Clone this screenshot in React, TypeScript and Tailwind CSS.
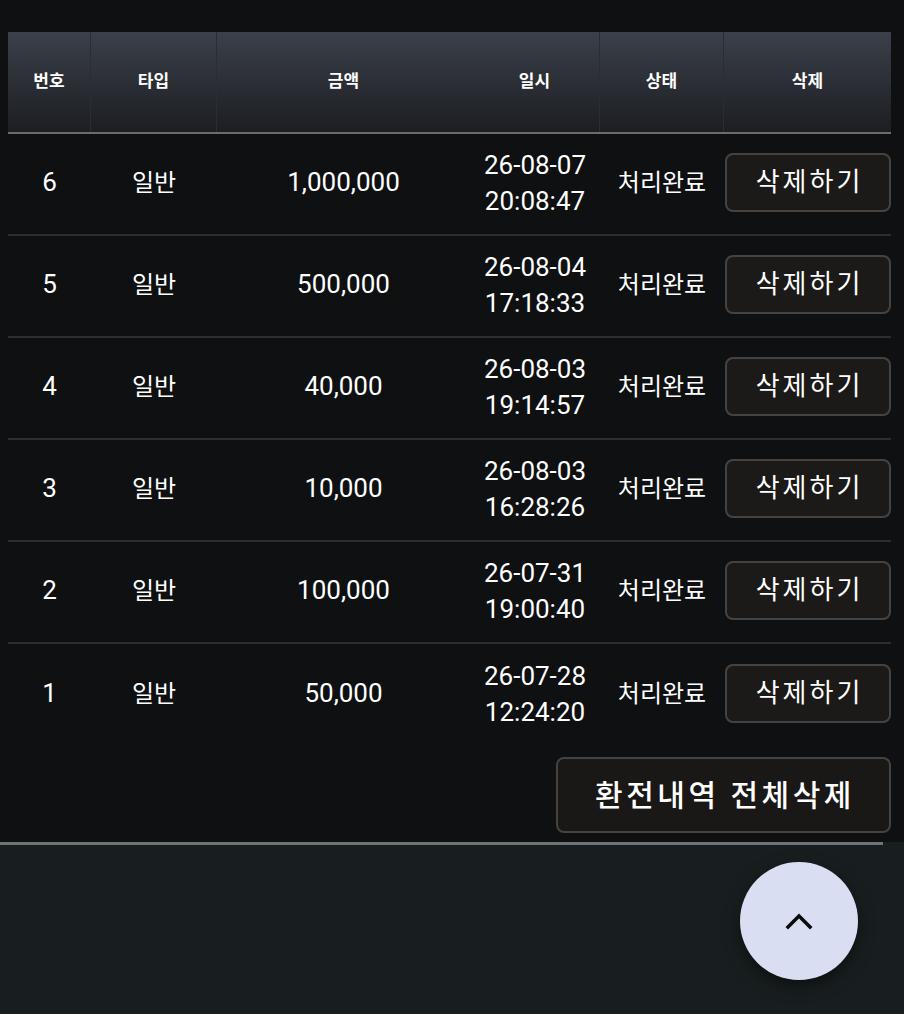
import React from 'react';

type Row = { no: number; type: string; amount: string; date: string; time: string; status: string };

const rows: Row[] = [
  { no: 6, type: '일반', amount: '1,000,000', date: '26-08-07', time: '20:08:47', status: '처리완료' },
  { no: 5, type: '일반', amount: '500,000', date: '26-08-04', time: '17:18:33', status: '처리완료' },
  { no: 4, type: '일반', amount: '40,000', date: '26-08-03', time: '19:14:57', status: '처리완료' },
  { no: 3, type: '일반', amount: '10,000', date: '26-08-03', time: '16:28:26', status: '처리완료' },
  { no: 2, type: '일반', amount: '100,000', date: '26-07-31', time: '19:00:40', status: '처리완료' },
  { no: 1, type: '일반', amount: '50,000', date: '26-07-28', time: '12:24:20', status: '처리완료' },
];

const cols = 'grid grid-cols-[83px_126px_253px_130px_124px_167px]';

export default function App() {
  return (
    <div
      className="w-[904px] h-[1014px] overflow-hidden bg-[#181e1f] text-white relative"
      style={{ fontFamily: "Roboto, 'Noto Sans CJK KR', sans-serif" }}
    >
      {/* table area */}
      <div className="bg-[#0e1011] pt-[32px] pb-[9px]">
        <div className="mx-[8px] w-[883px]">
          {/* header */}
          <div className={`${cols} h-[102px] bg-gradient-to-b from-[#3b404a] to-[#1c1e22] border-b-2 border-[#686d70] text-[17px] font-bold`}>
            {['번호', '타입', '금액', '일시', '상태', '삭제'].map((h, i) => (
              <div
                key={h}
                className={`flex items-center justify-center ${i === 0 || i === 1 || i === 3 || i === 4 ? 'border-r border-[#2a2d33]' : ''}`}
              >
                {h}
              </div>
            ))}
          </div>

          {/* rows */}
          {rows.map((r, idx) => (
            <div
              key={r.no}
              className={`${cols} h-[102px] pb-[3px] text-[24px] ${idx === rows.length - 1 ? '' : 'border-b-2 border-[#2c2f31]'}`}
            >
              <div className="flex items-center justify-center text-[26px]">{r.no}</div>
              <div className="flex items-center justify-center">{r.type}</div>
              <div className="flex items-center justify-center text-[26px]">{r.amount}</div>
              <div className="flex flex-col items-center justify-center text-[26px] leading-[36px]">
                <span>{r.date}</span>
                <span>{r.time}</span>
              </div>
              <div className="flex items-center justify-center">{r.status}</div>
              <div className="flex items-center justify-end">
                <button className="w-[166px] h-[59px] rounded-[8px] bg-[#1c1a18] border-2 border-[#454341] text-[26px] tracking-[3px] pl-[3px]">
                  삭제하기
                </button>
              </div>
            </div>
          ))}

          <div className="flex justify-end mt-[11px]">
            <button className="w-[335px] h-[76px] rounded-[8px] bg-[#1a1816] border-2 border-[#45433f] text-[30px] font-medium tracking-[3.5px] pl-[3px]">
              환전내역 전체삭제
            </button>
          </div>
        </div>
      </div>

      <div className="h-[3px] w-[883px] bg-[#6e7376]" />

      {/* scroll top */}
      <button className="absolute left-[740px] top-[862px] w-[118px] h-[118px] rounded-full bg-[#dadef3] shadow-[0_6px_16px_rgba(0,0,0,0.5)] flex items-center justify-center">
        <svg width="28" height="18" viewBox="0 0 28 18" fill="none">
          <path d="M3 15 L14 4 L25 15" stroke="#0b0b0b" strokeWidth="3.5" strokeLinecap="square" />
        </svg>
      </button>
    </div>
  );
}
